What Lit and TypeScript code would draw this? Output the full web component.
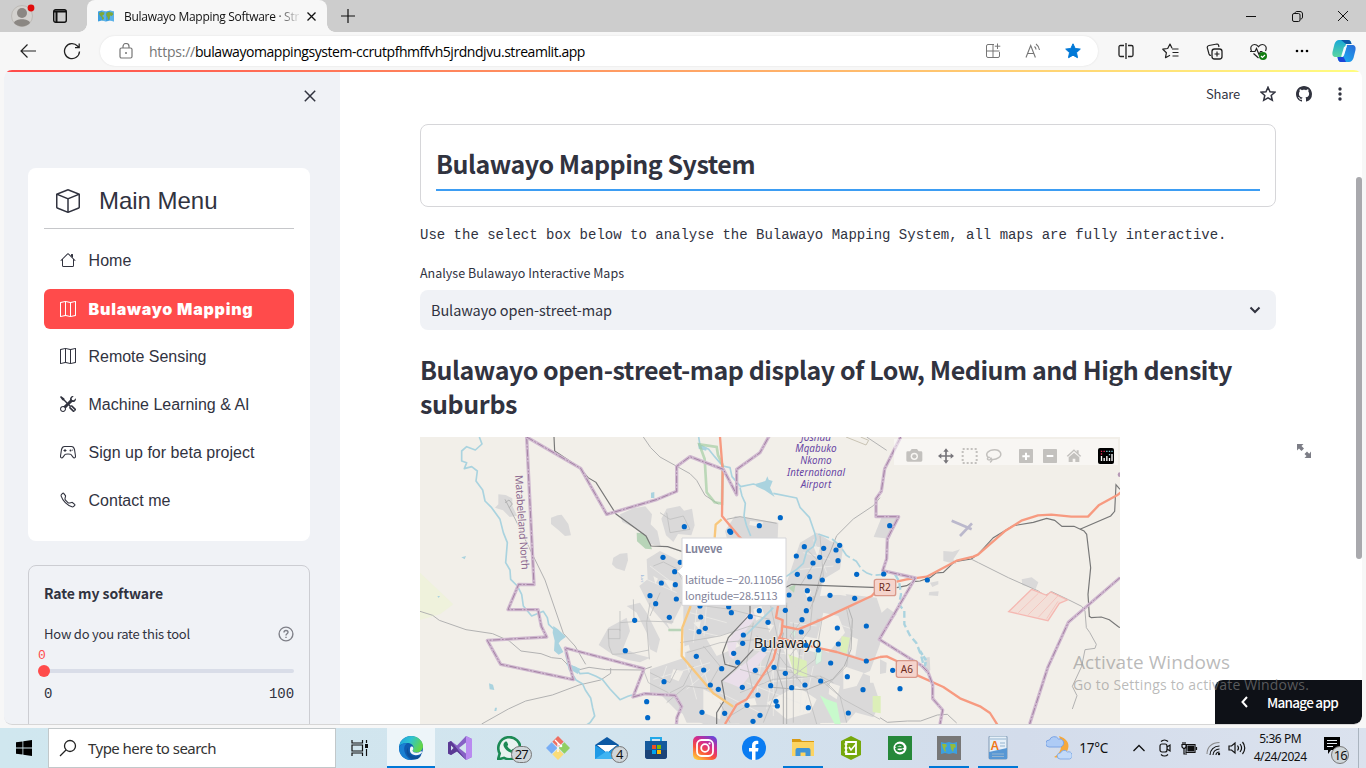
import { LitElement, html, svg, css, nothing } from "lit";
import { customElement, property } from "lit/decorators.js";

/** Single-line label whose tracking is adjusted so it spans `w` pixels. */
@customElement("fit-text")
class FitText extends LitElement {
  static styles = css`
    :host { display: inline-block; white-space: pre; }
    .run { display: inline-block; }
  `;
  @property() text = "";
  @property({ type: Number }) w = 0;
  render() {
    return html`<span class="run">${this.text}</span>`;
  }
  updated() {
    const run = this.renderRoot.querySelector(".run") as HTMLElement;
    run.style.letterSpacing = "0px";
    const natural = run.getBoundingClientRect().width;
    const n = this.text.length;
    if (this.w && n > 1) run.style.letterSpacing = `${(this.w - natural) / n}px`;
  }
}

const t = (text: string, w: number) => html`<fit-text .text=${text} .w=${w}></fit-text>`;

const ic = (size: number, box: string, body: unknown) =>
  html`<svg width=${size} height=${size} viewBox=${box} fill="none" stroke="currentColor">${body}</svg>`;
const solid = (size: number, ...paths: string[]) =>
  html`<svg width=${size} height=${size} viewBox="0 0 16 16" fill="currentColor">
    ${paths.map((d) => svg`<path d=${d} />`)}
  </svg>`;

const BOX = "M8.186 1.113a.5.5 0 0 0-.372 0L1.846 3.5 8 5.961 14.154 3.5 8.186 1.113zM15 4.239l-6.5 2.6v7.922l6.5-2.6V4.24zM7.5 14.762V6.838L1 4.239v7.923l6.5 2.6zM7.443.184a1.5 1.5 0 0 1 1.114 0l7.129 2.852A.5.5 0 0 1 16 3.5v8.662a1 1 0 0 1-.629.928l-7.185 2.874a.5.5 0 0 1-.372 0L.63 13.09a1 1 0 0 1-.63-.928V3.5a.5.5 0 0 1 .314-.464L7.443.184z";
const HOUSE = ["M2 13.5V7h1v6.5a.5.5 0 0 0 .5.5h9a.5.5 0 0 0 .5-.5V7h1v6.5a1.5 1.5 0 0 1-1.5 1.5h-9A1.5 1.5 0 0 1 2 13.5zm11-11V6l-2-2V2.5a.5.5 0 0 1 .5-.5h1a.5.5 0 0 1 .5.5z", "M7.293 1.5a1 1 0 0 1 1.414 0l6.647 6.646a.5.5 0 0 1-.708.708L8 2.207 1.354 8.854a.5.5 0 1 1-.708-.708L7.293 1.5z"];
const MAP = "M15.817.113A.5.5 0 0 1 16 .5v14a.5.5 0 0 1-.402.49l-5 1a.502.502 0 0 1-.196 0L5.5 15.01l-4.902.98A.5.5 0 0 1 0 15.5v-14a.5.5 0 0 1 .402-.49l5-1a.5.5 0 0 1 .196 0L10.5.99l4.902-.98a.5.5 0 0 1 .415.103zM10 1.91l-4-.8v12.98l4 .8V1.91zm1 12.98 4-.8V1.11l-4 .8v12.98zm-6-.8V1.11l-4 .8v12.98l4-.8z";
const TOOLS = "M1 0 0 1l2.2 3.081a1 1 0 0 0 .815.419h.07a1 1 0 0 1 .708.293l2.675 2.675-2.617 2.654A3.003 3.003 0 0 0 0 13a3 3 0 1 0 5.878-.851l2.654-2.617.968.968-.305.914a1 1 0 0 0 .242 1.023l3.356 3.356a1 1 0 0 0 1.414 0l1.586-1.586a1 1 0 0 0 0-1.414l-3.356-3.356a1 1 0 0 0-1.023-.242L10.5 9.5l-.96-.96 2.68-2.643A3.005 3.005 0 0 0 16 3c0-.269-.035-.53-.102-.777l-2.14 2.141L12 4l-.364-1.757L13.777.102a3 3 0 0 0-3.675 3.68L7.462 6.46 4.793 3.793a1 1 0 0 1-.293-.707v-.071a1 1 0 0 0-.419-.814L1 0zm9.646 10.646a.5.5 0 0 1 .708 0l3 3a.5.5 0 0 1-.708.708l-3-3a.5.5 0 0 1 0-.708zM3 11l.471.242.529.026.287.445.445.287.026.529L5 13l-.242.471-.026.529-.445.287-.287.445-.529.026L3 15l-.471-.242L2 14.732l-.287-.445L1.268 14l-.026-.529L1 13l.242-.471.026-.529.445-.287.287-.445.529-.026L3 11z";
const PHONE = "M3.654 1.328a.678.678 0 0 0-1.015-.063L1.605 2.3c-.483.484-.661 1.169-.45 1.77a17.568 17.568 0 0 0 4.168 6.608 17.569 17.569 0 0 0 6.608 4.168c.601.211 1.286.033 1.77-.45l1.034-1.034a.678.678 0 0 0-.063-1.015l-2.307-1.794a.678.678 0 0 0-.58-.122l-2.19.547a1.745 1.745 0 0 1-1.657-.459L5.482 8.062a1.745 1.745 0 0 1-.46-1.657l.548-2.19a.678.678 0 0 0-.122-.58L3.654 1.328z";
const GITHUB = "M8 0C3.58 0 0 3.58 0 8c0 3.54 2.29 6.53 5.47 7.59.4.07.55-.17.55-.38 0-.19-.01-.82-.01-1.49-2.01.37-2.53-.49-2.69-.94-.09-.23-.48-.94-.82-1.13-.28-.15-.68-.52-.01-.53.63-.01 1.08.58 1.23.82.72 1.21 1.87.87 2.33.66.07-.52.28-.87.51-1.07-1.78-.2-3.64-.89-3.64-3.95 0-.87.31-1.59.82-2.15-.08-.2-.36-1.02.08-2.12 0 0 .67-.21 2.2.82.64-.18 1.32-.27 2-.27.68 0 1.36.09 2 .27 1.53-1.04 2.2-.82 2.2-.82.44 1.1.16 1.92.08 2.12.51.56.82 1.27.82 2.15 0 3.07-1.87 3.75-3.65 3.95.29.25.54.73.54 1.48 0 1.07-.01 1.93-.01 2.2 0 .21.15.46.55.38A8.013 8.013 0 0 0 16 8c0-4.42-3.58-8-8-8z";

const worldMap = (s: number) => html`<svg width=${s} height=${s} viewBox="0 0 16 16">
  <path fill="#3c9fe0" d="M0 3.5 4 2.5l4 1 4-1 4 1v10l-4-1-4 1-4-1-4 1z" />
  <path fill="#7cc4f0" d="M4 2.5l4 1v10l-4-1zM12 2.5l4 1v10l-4-1z" opacity=".5" />
  <path fill="#7ea838" d="M1 5l3-1 2.500.5-.5 2L4 8l1.500 1 .5 1.500-1.500 2L3.500 9 1.500 7zM8.500 5l2-1 4 .5.8 2-1.800 1.500-1.500-.5L11.500 11l-1.200 1L9.500 9 8.300 7.500z" />
</svg>`;

/* Suburb markers: [x, y] in map units, three units to a pixel. */
const DOTS: number[][] = [
  [616, 644], [644, 553], [680, 797], [683, 845], [690, 479], [707, 503],
  ...[[103, 272], [391, 245], [328, 269], [239, 285], [242, 289], [39, 364], [91, 379], [74, 407], [34, 441], [76, 446], [79, 489], [58, 544], [150, 510], [152, 543], [166, 577], [147, 587], [139, 661], [161, 702], [215, 698], [42, 737], [181, 747], [205, 760], [156, 829], [224, 832], [463, 332], [439, 360], [521, 337], [558, 342], [569, 328], [509, 364], [489, 381], [564, 374], [442, 415], [479, 422], [517, 432], [620, 415], [701, 414], [472, 464], [417, 477], [479, 489], [540, 478], [614, 487], [236, 512], [244, 530], [328, 524], [301, 542], [354, 559], [406, 523], [469, 524], [456, 551], [454, 588], [562, 576], [649, 570], [280, 597], [278, 622], [342, 640], [251, 652], [263, 679], [468, 628], [505, 642], [565, 624], [542, 681], [649, 675], [592, 722], [316, 703], [372, 694], [406, 712], [277, 754], [362, 749], [425, 755], [465, 747], [512, 735], [639, 761], [324, 777], [291, 808], [378, 796], [382, 810], [330, 838], [309, 856], [475, 815], [595, 831]].map(([x, y]) => [x + 690, y]),
  ...[[29, 269], [142, 432], [38, 703], [60, 758]].map(([x, y]) => [x + 1380, y]),
];

@customElement("city-map")
class CityMap extends LitElement {
  static styles = css`
    :host { display: block; width: 700px; height: 287px; }
    svg { display: block; }
    .urban { fill: #dad9d9; }
    .gap { fill: #f1eee8; }
    .road { fill: none; stroke: #b2b2b2; stroke-width: 3; }
    .fine { fill: none; stroke: #bfbfbf; stroke-width: 2.500; }
    .lane { fill: none; stroke: #eceae7; stroke-width: 2.500; }
    .rail { fill: none; stroke: #777; stroke-width: 3.500; }
    .river { fill: none; stroke: #aad3df; stroke-width: 5; stroke-linejoin: round; }
    .trunk { fill: none; stroke: #f79a80; stroke-width: 7; stroke-linejoin: round; }
    .prim { fill: none; stroke: #f8c77c; stroke-width: 7; stroke-linejoin: round; }
    .edge { fill: none; stroke: #d0b9d0; stroke-width: 10; stroke-linejoin: round; }
    .mid { fill: none; stroke: #a583a5; stroke-width: 3; stroke-dasharray: 22 5 5 5; }
    .dot { fill: #0068c9; }
    .place { font-family: "Noto Sans", sans-serif; }
    .src { font-family: "Noto Sans CJK SC", sans-serif; fill: #83849a; }
    .air { font-style: italic; fill: #6846a4; font-size: 30px; }
    .halo { stroke: #f2efe9; stroke-width: 6; paint-order: stroke; }
    .badge { fill: #f5d4cc; stroke: #d9998a; stroke-width: 4; }
    .code { font-size: 30px; fill: #6b2b20; }
  `;

  private border(d: string) {
    return svg`<path class="edge" d=${d} /><path class="mid" d=${d} />`;
  }

  render() {
    return html`<svg width="700" height="287" viewBox="0 3 2100 861">
      <rect y="0" width="2100" height="870" fill="#f2efe9" />
      <path d="M0 410 100 505 60 535 0 552z" fill="#eff2dc" />
      <g class="urban">
        <path d="M235 175l22 2 20 10v22l14 30-22 4-20-20-24-8 10-10z" />
        <path d="M393 245l20-7 12-2 20 28 8 34-18 2-20-18-22-18z" />
        <path d="M580 365l20-12 22-2 2 22-10 32-26-8-12-12z" />
        <path d="M600 235l40-18 36-6 20 24-4 30 20 20 10 45-30-5-40-45-45-22zM740 218l40-8 12 14 24-6 8 50-10 30-40-4-14 24-22-20-14-50z" />
        <path d="M680 370l40-25 60 30 8 125-40 80-60-70-30-60 25-20z" />
        <path d="M620 510l40-10 20 30 40 80-10 40-20-10-10-50-30-60z" />
        <path d="M565 575l55-30 10 40-20 50 40 20 40 10-30 14-40-8-40-14-44-30z" />
        <path d="M690 700l90-30 110-40 30 60 10 80-30 90-100 0-40-90-70 0z" />
        <path d="M790 470l180-40 30 90-10 80-50 60-40 50-40-10-60 10-10-120z" />
        <path d="M915 285l30-45 130 20-2 45-50 30-100-20z" />
        <path d="M1100 440l40-120 50-30 40 25 40 15-10 70-50 30-10 50 80-5 90 10 20 60-10 80-30 80-50 20-80-40-140-50z" />
        <path d="M980 500l110-20 110 90 100 20-20 110-60 120-20 44h-240l-60-70 30-90-20-100z" />
        <path d="M820 690l200 0 100-40 120 30 110 40 0 60-70 80-430 4-80-40-70-70z" />
        <path d="M1270 740l90 0 20 60-20 44-50-14-40-30z" />
        <path d="M1361 303l24-60h50l-26 65z" />
        <path d="M1380 535l22-20 28 20-50 62z" />
        <path d="M1570 345l28 2 22-7-20 30 10 15-40-10zM1805 430l30-6 20 15-8 20-40-12zM1530 440l25-5v10l-18 8zM1528 468l28-2-2 14-28-2zM1515 665l14-2 2 40-10 4zM1380 670l20 10-2 30-18 4z" />
      </g>
      <g class="gap">
        <path d="M860 610l70-20 30 40-70 30zM900 400l60 0 0 60-50 0zM1210 530l45 10 20 50-50 60-40-20zM1150 600l50 10-10 40-40-10zM1270 690l60 20-20 40-40 10zM850 760l60 30-10 60-50-20zM1040 800l90-50 60 40-20 40-70 20zM740 560l30 10-10 30zM730 430l30 5-5 30zM1090 640l40 0 20 60-30 10zM1220 470l40-20 20 30z" />
        <path d="M770 640l36-14 4 16-30 14zM760 700l30 6-14 30-24-10zM1000 520l24-10 10 30-26 14zM960 690l30 6-10 24-26-6zM1290 600l24 10-8 50-20-8zM1230 740l30 10-10 40-24-16zM700 420l14 8-8 16zM980 790l24-4 6 20-30 8zM1180 330l20 4-8 26zM1150 460l24 6-10 24zM820 560l22-4-4 24zM990 255l40 4-8 14-34-6zM1040 560l22 8-14 22z" />
      </g>
      <g class="lane">
        <path d="M810 530l110 30M806 580l90 20M830 520l-10 100M860 500l-8 100M700 730l170-50M720 750l20-60M800 680l30 110M840 670l40 120M870 700l-70 60M990 640l160 20M1000 690l130 10M1030 620l-20 160M1060 600v240M1150 650l-10 180M1180 690l-30 140M1200 720l-170 20M980 740l180 70M900 770l120 60M1150 350l80 20M1140 400l100-10M1180 310l40 100M1110 560l80 10M1240 560l60 20M690 390l80 60M680 430l90 40M1080 560l-40 260" />
      </g>
      <path d="M920 620l70-95 20 15-60 80-10 50-12-10zM910 735l110-90 20 10-80 100-24-10z" fill="#eadfea" />
      <path d="M650 290l20 2 14 14 12 34-20-2-25-22zM1105 455l22-10-5 25zM745 578h40v8h-40z" fill="#b8d4b8" />
      <path d="M1105 655l55 20 2 50-40-12zM1265 600l25 5-10 48-20-8zM1358 780h24v52l-24-4z" fill="#dcefb8" />
      <path d="M1200 778l20 12 30 10 12 64h-18l-30-58z" fill="#c8facc" />
      <path d="M1184 648l22-8-2 36-16 10zM1112 588l14-2-2 18z" fill="#d8f4e0" stroke="#b8d8c8" />

      <g class="fine">
        <path d="M565 580h35v28h-35zM600 525v60M600 560l70-5 90 3M640 490l2 60M565 580l2 50 10 25 60-3 50-10M690 500l-10 60 8 110M720 470l-30 70M700 390l30-12 40 20 20 40M670 700l15 40 60 30M690 710l60 30 20-40M800 650l100-30 120-10 110 30M780 500l150 20 120 30M1000 560l-20 120 20 90M1050 500l30 140-10 120-40 100M1120 560v300M1140 560l-30 40 30 40-10 90M1180 480l-10 100-60 80M860 760l40-70-50-60M780 620l120-20 90-30 60 10M740 800l60-50 80 10M1010 600l60 50 30 40 100 40 70 60 110 60M1190 550l16 0-20 120-80 60M1110 700l50 60 30 104M960 700l70 20 30-20 60 10M960 770l100-40 140-10 40 20M930 840l50-30 90 0M1150 330l40 40-50 80M1200 300l10 120-40 100" />
        <path d="M720 230l30 20 40-10 20 40-60 10-10-60M1280 520l14 70-14 100-60 60M1200 720l60 60 20 80M900 800l30 60M820 690l-30 60-40 20" />
      </g>
      <g class="road">
        <path d="M0 526l38 12 20 15 80 28 80 12 50 22 35 30 60 8 32 12 30 3 22 22 20 14 40-10 50 7 110 1 28-10" />
        <path d="M255 190l32 62 88 180 55 160 35 38 32 55" />
        <path d="M185 864l80-45 52-24 80-18 80-30 65-15 30-20v-16" />
        <path d="M670 3l22 32 28 28 90 50 20 20 25 45 40 26" />
        <path d="M1285 515l12 35-4 90-20 50-35 40-80 32-100-8-20-60 20-60" />
        <path d="M1380 185l-20 24-60 40-50 50-20 50-20 40-30 110M1340 3l60 40" />
        <path d="M1655 370l20 10 90 45 90 40 20 14 20-12 50 24 40 20 10 14 4 50 10 14 20 36-4 12-30 4-10 50-28 60 14 28-14 40" />
        <path d="M1380 845l22 14 60-4 40 0 50-18 30-2 28 26" />
        <path d="M255 200l12-8 10 12-10 12" />
        <path d="M920 250l40-8 110 20" />
      </g>
      <g class="rail">
        <path d="M402 3l2 42 75 50 25 30 24 14 60 95 90 66 15 30 50 2 42 14" />
        <path d="M1095 455l20-10 260 10M1430 455l30-6 20-12 20-2 30-10 18-14 22-2 34-32 50-8 20-14 46-50 60-36 60-10 40-12 24 6 22 18 36 0 30 14 8 10 12 100-8 80 4 66 6 4 30-2 24 8 28 22 32 10" />
        <path d="M1980 280l92-40 12-14 4-80 12 14" />
        <path d="M990 505v30l-65 70-17 45 7 35 35 10 50-55-50 55-45 40 10 55-25 40v34" />
      </g>
      <path class="road" d="M1100 500v364M1090 590l-20 110 20 60v104" />

      <g class="river">
        <path d="M178 3 186 24 166 42 140 32 125 45 125 75 140 80 133 98 155 92 172 105 168 135 188 162 195 195 215 215 240 250 250 290 262 320 257 380 270 402 272 430 292 450 305 475 310 510 335 540 370 526 382 545 386 565 404 582" />
        <path d="M436 650l12 50 20 32 20 12 8 18 16 24 6 30 6 24-14 20-18 12" />
        <path d="M440 685l28 10 12 18 24-2 24 10 20 10 22 28 30 32 24-10 12-4" />
        <path d="M836 3 840 28 866 40 884 62 908 90 930 95 936 122 962 152 1000 144 1020 150M1060 172 1130 186 1140 214 1168 244 1184 290 1188 310 1180 332 1160 346 1150 382 1130 400 1098 422" />
        <path d="M960 155 966 180 976 202 972 240 980 270 992 300M975 600 1025 550 1060 515" />
        <path d="M1195 294l40 14 24 20 20 30 30 18 16 24 14 10 20 8 44-4" stroke-dasharray="34 10" />
        <path d="M1425 415l12 20 6 40-6 30 16 20 0 40 16 32 20 24 14 36 10 40 8 12" stroke-dasharray="20 10" stroke-width="7" />
        <path d="M1500 645l18 28-4 20 10 16" stroke-dasharray="14 5" stroke-width="8" />
      </g>
      <path fill="#aad3df" d="M400 570l14 10 24 22-16 12-6 8 14 26-14 8-14-12 2-30-6-24zM1008 143l28-8 6-14 4 10 12 4-8 20 14 28-30-20-26-12zM207 742l12 4 4 16-14-2zM225 815l6 0-2 10-6 0zM693 170l10-2v18h-10zM124 364l14-4-4 10zM455 688l26 10-8 16-16-10zM52 480l8 0-4 6zM834 22l28 14-4 8-22-6z" />
      <path fill="none" stroke="#9ecb9e" stroke-opacity=".65" stroke-width="8" d="M838 25l52 8 4 24 14 30-2 116-22-4-24-30-6-100z" />

      <g class="prim">
        <path d="M905 250 887 266 884 305M812 510 787 575 785 660 880 772 940 812" />
      </g>
      <g class="trunk">
        <path d="M900 3 908 103 906 240 956 300 1040 380 1075 505 1068 545 1088 552 1085 590 1075 612 1060 670 980 790 950 806 915 864" />
        <path d="M1085 570 1135 580 1205 550 1280 515 1355 480 1364 470M1075 605 1190 635 1250 648 1339 675 1380 663M1430 437l30-7 60-8 90-48 50-12 14-6 80-70 50-32 50-16 40-2 60 6h50l32-34 55-30 18-14" />
        <path d="M1380 663l20-2 30 14 64 44 76 34 50 34 60 24 30 20 24 38" />
      </g>

      ${this.border("M320 3l22 443-46-1-32 76h90l10 50 16 32-178 10 40 72 218 46-24-95 236 62-33 85 36-10 50 3 40 2 20 34-14 32-4 50")}
      ${this.border("M320 3l162 94 78 138 152-45 58-24v-75l40-29 100 38 40 76 0-76 70-50 28-51")}
      ${this.border("M1442 3l-48 95-10 68-16 22 0 54 68 0-34 66-2 60-12 36 98 22-108 184 96 60 30 18 20 20 14 38 0 42 30 34-8 42")}
      ${this.border("M2100 425l-155 134-62 136-54 169")}
      <circle cx="2100" cy="116" r="7" fill="#b79ab7" />
      <path d="M1595 254l60 26M1620 300l36-38" stroke="#bbb8cc" stroke-width="8" />
      <path d="M1278 3l60 24 8-14-24-10" fill="none" stroke="#c9c4b4" stroke-width="3" />
      <g stroke="#f5b8b2" stroke-width="4">
        <path d="M1835 460l45 18 12-10 50 24-24 10-34 52-118-27z" fill="#f3dfd8" />
        <path d="M1795 530l60-58M1825 536l60-60M1855 544l60-66M1880 548l34-52" stroke-width="2" />
      </g>

      <g class="place air halo" text-anchor="middle">
        <text x="1188" y="14">Joshua</text>
        <text x="1188" y="48" textLength="124">Mqabuko</text>
        <text x="1188" y="84" textLength="94">Nkomo</text>
        <text x="1188" y="119" textLength="174">International</text>
        <text x="1188" y="155" textLength="92">Airport</text>
      </g>
      <text class="place halo" font-size="32" fill="#8c6990" transform="translate(285 118) rotate(86)" textLength="284">Matabeleland North</text>
      <text class="place" font-size="11" fill="#7fa8d8" transform="translate(664 416) rotate(90)">Luvc</text>
      <text class="place" stroke="#f2efe9" stroke-width="5" paint-order="stroke" font-size="44" fill="#222" x="1001" y="636" textLength="202">Bulawayo</text>
      ${DOTS.map(([x, y]) => svg`<circle class="dot" cx=${x} cy=${y} r="7.800" />`)}

      <rect class="badge" x="1363" y="430" width="64" height="49" rx="6" />
      <text class="place code" x="1376" y="465" textLength="36">R2</text>
      <rect class="badge" x="1429" y="674" width="63" height="50" rx="6" />
      <text class="place code" x="1442" y="710" textLength="37">A6</text>

      <path d="M786 306h312v202H786v-88l-15-14 15-13z" fill="#fff" stroke="#d5d5d8" stroke-width="3" />
      <text class="src" font-weight="700" font-size="33" x="795" y="351" textLength="112">Luveve</text>
      <text class="src" font-size="33" x="795" y="444" textLength="294">latitude =−20.11056</text>
      <text class="src" font-size="33" x="795" y="492" textLength="278">longitude=28.5113</text>

      <rect x="1422" y="9" width="672" height="78" fill="#fff" fill-opacity=".45" />
      <g fill="#c3c1be">
        <path d="M1463 46h7l5-7h16l5 7h7q4 0 4 4v23q0 4-4 4h-40q-4 0-4-4V50q0-4 4-4z" />
        <circle cx="1483" cy="61" r="11" fill="#f8f6f3" /><circle cx="1483" cy="61" r="6.500" />
        <rect x="1797" y="39" width="42" height="42" rx="2" />
        <path d="M1815 50h6v8h8v6h-8v8h-6v-8h-8v-6h8z" fill="#fff" />
        <rect x="1869" y="39" width="42" height="42" rx="2" />
        <path d="M1880 57h20v6h-20z" fill="#fff" />
        <path d="M1940 60l22-20 8 8v-5h6v10l8 7-4 2-18-17-18 17zM1946 64l16-14 16 14v14h-12v-10h-8v10h-12z" />
      </g>
      <path d="M1628 39h42v42h-42z" fill="none" stroke="#c3c1be" stroke-width="6" stroke-dasharray="6 6" />
      <path d="M1706 66c-14-12 0-25 18-25s24 16 12 24-24 6-26 4m0-4c-6-4-10 4-6 6s10 0 8-6c6 6 4 10-2 14" fill="none" stroke="#c3c1be" stroke-width="4.500" />
      <g stroke="#77757a" stroke-width="5" fill="#77757a">
        <path d="M1578 44v32M1562 60h32" />
        <path stroke="none" d="M1578 37l8 10h-16zM1578 83l8-10h-16zM1554 60l10-8v16zM1602 60l-10-8v16z" />
      </g>
      <rect x="2034" y="36" width="48" height="48" rx="6" fill="#000" />
      <path d="M2044.500 60v15M2052.500 66v9M2060.500 60v15M2068.500 66v9M2076 54v21" stroke="#fff" stroke-width="4" />
      <path d="M2044.500 44v4M2052.500 44v4M2044.500 52v4" stroke="#e0285a" stroke-width="4" />
      <path d="M2060.500 44v4M2068.500 44v4M2068.500 54v4M2076 44v4" stroke="#7fc8d8" stroke-width="4" />
    </svg>`;
  }
}

@customElement("task-bar")
class TaskBar extends LitElement {
  static styles = css`
    :host { display: flex; height: 40px; box-sizing: border-box; background: linear-gradient(90deg, #d0e7ef, #d2e4ee 45%, #d3dceb 75%, #dbe2ee); font-family: "Noto Sans", "Open Sans", sans-serif; color: #111; }
    svg { display: block; flex: none; }
    .start { width: 48px; display: flex; align-items: center; justify-content: center; }
    .search { width: 286px; height: 38px; border: 1px solid #c2c8ca; background: #fff; display: flex; align-items: center; }
    .search svg { margin: 0 11px 0 10px; }
    .search fit-text { font-size: 15px; color: #333; }
    .view { width: 51px; display: flex; align-items: center; justify-content: center; }
    .view svg { margin-right: 4px; }
    .apps { flex: none; display: grid; grid-template-columns: repeat(13, 48.950px); }
    .app { position: relative; display: flex; align-items: center; justify-content: center; width: 48px; height: 40px; box-sizing: border-box; }
    .open::after { content: ""; position: absolute; left: 4px; right: 4px; bottom: 0; height: 2px; background: #0078d7; }
    .active { background: #edf5f9; }
    .active::after { left: 0; right: 0; }
    .count { position: absolute; left: 26px; top: 18px; width: 21px; height: 17px; box-sizing: border-box; border: 1px solid #777; border-radius: 9px; background: #cfd6da; font-size: 13px; line-height: 15px; text-align: center; letter-spacing: -0.800px; }
    .round { left: 28px; width: 17px; }
    .tray { flex: 1; display: flex; align-items: center; }
    .tray > * { flex: none; }
    .cell { display: flex; justify-content: center; }
    .weather { margin-left: 23px; }
    .temp { margin-left: 7px; width: 46px; font-size: 13.500px; }
    .up { width: 28px; }
    .c24 { width: 24px; }
    .clock { width: 62px; font-size: 12px; line-height: 18px; display: flex; flex-direction: column; align-items: center; }
    .note { position: relative; margin-left: 13px; width: 34px; height: 24px; }
    .note .count { left: 7px; top: 10px; width: 18px; height: 18px; line-height: 16px; letter-spacing: -1px; }
    .desk { border-left: 1px solid #aab4bf; height: 40px; width: 3px; }
  `;

  render() {
    const app = (cls: string, body: unknown, badge: unknown = nothing) => html`<div class="app ${cls}">
      <svg width="24" height="24" viewBox="0 0 24 24">${body}</svg>${badge}
    </div>`;
    return html`
      <div class="start"><svg width="16" height="16" viewBox="0 0 16 16"><path d="M0 2.300 6.500 1.400v6.200H0zM7.300 1.300 16 0v7.600H7.300zM0 8.400h6.500v6.200L0 13.700zM7.300 8.400H16V16l-8.700-1.300z" /></svg></div>
      <div class="search">
        <svg width="18" height="18" viewBox="0 0 18 18" fill="none" stroke="#222" stroke-width="1.300"><circle cx="11" cy="7" r="5.500" /><path d="M7 11 1 17" /></svg>
        ${t("Type here to search", 128)}
      </div>
      <div class="view"><svg width="18" height="16" viewBox="0 0 18 16" fill="none" stroke="#111" stroke-width="1.200"><path d="M1 0v3h10.500V0M1 16v-3h10.500v3M1 5h10.500v6H1zM15.500 0v3M15.500 9v7" /><path d="M14 4h3v4h-3z" fill="#111" stroke="none" /></svg></div>
      <div class="apps">
        ${app("open active", svg`
          <defs><linearGradient id="e1" x1="0" y1="0" x2="1" y2=".4"><stop offset="0" stop-color="#1b9de2" /><stop offset=".5" stop-color="#2fc3cf" /><stop offset="1" stop-color="#62d64a" /></linearGradient></defs>
          <circle cx="12" cy="12" r="12" fill="#0f5cb0" />
          <path d="M0 11C1 4 6 0 12 0c7 0 12 5 12 10 0 4-3 6.500-6.500 6.500-3 0-4-1.300-4-2 0-.8 1-1.300 1-3 0-2-2-4.500-6-4.500S1 8 0 11z" fill="url(#e1)" />
          <path d="M0 12c1-4 5-5.500 8-4.500C5 9 4.500 13 6 17c1 3 3 5.500 6 7C5 24 0 19 0 12z" fill="#1a80d2" />
          <path d="M9 11.500c-1 4 2 8.500 7 9 2.500.2 5-1 6.500-2-1.500 3-3 4-4 4.500-5 1-9-1-10.500-5-.8-2.500 0-5.500 1-6.500z" fill="#0c4f98" />
          <path d="M13.500 14.500c.5 2.500 5 3 8 1 1-.6 2 .3 1.500 1-2 3-9 4-11.500 0-1-2-.5-4.500 0-5.500 2-1.500 4 1 2 3.500z" fill="#f2f7fa" />`)}
        ${app("", svg`
          <path d="M18 0l6 3v18l-6 3-9-9-6 4-3-1.500V6.500L3 5l6 4.500z" fill="#8661c5" />
          <path d="M18 0l6 3v18l-6 3z" fill="#b98af0" /><path d="M18 6.500V17.500L11 12z" fill="#d4e5ee" />
          <path d="M0 6.500 3 5l15 19-9-8.500L3 19 0 17.500zM3 9.500v5L5.500 12z" fill="#5b3a94" /><path d="M3 9.500v5L5.500 12z" fill="#d4e5ee" />`)}
        ${app("", svg`
          <path d="M1 23.500 2.700 17.500A11 11 0 1 1 7 21.800z" fill="#e8f3f0" stroke="#1c8a55" stroke-width="2.600" />
          <path d="M8 6c1-.8 2-.3 2.500 1l.6 1.500c0 .8-1 1.500-.6 2 1 1.700 2.300 2.700 4 3.400.8 0 1-1.400 1.900-1.200l2.300 1.300c.3 2-1.700 3.300-3.700 3C11 16.500 7 12 6.500 9.500 6.300 8 7 6.800 8 6z" fill="#1c8a55" />`, html`<span class="count">27</span>`)}
        ${app("", svg`<g transform="rotate(45 12 12)">
          <rect x="3.500" y="3.500" width="8" height="8" fill="#ee6f62" /><rect x="12.500" y="3.500" width="8" height="8" fill="#91cf62" />
          <rect x="3.500" y="12.500" width="8" height="8" fill="#78aef5" /><rect x="12.500" y="12.500" width="8" height="8" fill="#fbdc78" /></g>
          <path d="M9 4l6 6M12 7v9" stroke="#fff" stroke-width="1.300" /><circle cx="15" cy="10" r="1.300" fill="#fff" />`)}
        ${app("", svg`
          <path d="M0 9 12 1l12 8v14H0z" fill="#0c59a4" /><path d="M2 9h20l-10 8z" fill="#fff" /><path d="M0 9l12 8 12-8v14H0z" fill="#1f9ae6" /><path d="M0 23 12 15l12 8z" fill="#40b4f2" />`, html`<span class="count round">4</span>`)}
        ${app("", svg`
          <path d="M7 6V2h10v4" fill="none" stroke="#22a8e8" stroke-width="2" /><path d="M1 5h22v15q0 3-3 3H4q-3 0-3-3z" fill="#155a9c" /><path d="M1 14h22v6q0 3-3 3H4q-3 0-3-3z" fill="#1b4377" />
          <path d="M8 9h4v4H8z" fill="#f25022" /><path d="M13 9h4v4h-4z" fill="#7fba00" /><path d="M8 14h4v4H8z" fill="#00a4ef" /><path d="M13 14h4v4h-4z" fill="#ffb900" />`)}
        ${app("", svg`
          <defs><linearGradient id="ig" x1=".2" y1="1" x2=".8" y2="0"><stop offset="0" stop-color="#ffc83c" /><stop offset=".35" stop-color="#f9503a" /><stop offset=".65" stop-color="#d42b8c" /><stop offset="1" stop-color="#6a45d8" /></linearGradient></defs>
          <rect width="24" height="24" rx="5" fill="url(#ig)" /><rect x="4" y="4" width="16" height="16" rx="4.500" fill="none" stroke="#fff" stroke-width="1.800" /><circle cx="12" cy="12" r="3.800" fill="none" stroke="#fff" stroke-width="1.800" /><circle cx="16.500" cy="7.500" r="1.100" fill="#fff" />`)}
        ${app("", svg`<circle cx="12" cy="12" r="12" fill="#0a7cf2" /><path d="M10 24v-8.500H7V12h3V9.500C10 6.300 12 4.800 14.300 4.800c1 0 2 .2 2 .2v3h-1.200c-1.300 0-1.600.8-1.600 1.600V12h3l-.5 3.500h-2.500V24z" fill="#fff" />`)}
        ${app("open", svg`<path d="M1 3h8l2 2h12v4H1z" fill="#d99a12" /><path d="M1 6h22v14H1z" fill="#fcd462" /><path d="M4.500 20v-6q0-2 2-2h11q2 0 2 2v6h-5v-3.500h-5V20z" fill="#3f94d6" />`)}
        ${app("", svg`<path d="M12 0 22 5v14l-10 5L2 19V5z" fill="#76a80c" /><path d="M7 6h10v12H7z" fill="none" stroke="#fff" stroke-width="1.800" /><path d="M5.500 8h3M5.500 12h3M5.500 16h3M10 11l2 3 5-6" stroke="#fff" stroke-width="1.600" fill="none" />`)}
        ${app("", svg`<rect width="24" height="24" fill="#26883a" /><circle cx="12" cy="12" r="6.500" fill="#fff" /><path d="M8 11c1-3 6-3 7 0-2 2-4-1-7 1.500 1 3.500 5 3.500 7.500 1" fill="none" stroke="#26883a" stroke-width="1.800" />`)}
        ${app("open", svg`<rect width="24" height="24" fill="#777" /><path fill="#3c9fe0" d="M4 6l4 1 4-1 4 1 4-1v12l-4-1-4 1-4-1-4 1z" /><path fill="#93bb3e" d="M5 8l4 0 1 2-2 2 1 3-1 1-2-4zM13 8l5 0 1 3-2 1-1 4-2-3z" />`)}
        ${app("open", svg`<rect x="3" y="0" width="18" height="23" rx="1" fill="#e6f0f8" stroke="#7e99b4" /><path d="M3 16l18-4v11H3z" fill="#5797d4" /><path d="M4 3h16M14 7h5M14 10h5M6 18h12M6 20.500h12" stroke="#94b4d0" /><text x="4.500" y="14" font-size="12" font-weight="700" fill="#f07818" font-family="Liberation Sans">A</text>`)}
      </div>
      <div class="tray">
        <svg class="weather" width="26" height="26" viewBox="0 0 26 26"><path d="M13 1c7 2 11 7 9 13s-8 10-14 8c6-3 10-11 5-21z" fill="#f5a83c" /><path d="M3 12a3.500 3.500 0 0 1 .5-7 5 5 0 0 1 9-1 4 4 0 0 1 2 8z" fill="#aecbf5" stroke="#7ca4e4" /><path d="M14 24a3 3 0 0 1 .5-6 4 4 0 0 1 7-1 3.500 3.500 0 0 1 2 7z" fill="#c2daf8" stroke="#85aee8" /></svg>
        <span class="temp">${t("17°C", 29)}</span>
        <span class="cell up"><svg width="12" height="8" viewBox="0 0 12 8" fill="none" stroke="#111" stroke-width="1.300"><path d="M.5 7 6 1.500 11.500 7" /></svg></span>
        <span class="cell c24"><svg width="14" height="18" viewBox="0 0 14 18" fill="none" stroke="#111" stroke-width="1.200"><rect x="2" y="5" width="7" height="8" rx="2" /><path d="M9 8l3-2v6L9 10M3 2.500C5 .5 8 .5 10 2.500M3 15.500c2 2 5 2 7 0" /></svg></span>
        <span class="cell c24"><svg width="18" height="14" viewBox="0 0 18 14" fill="none" stroke="#111" stroke-width="1.200"><path d="M6.500 3.500H15v8H6zM16.500 6v3M3 1v2M5 1v2M2 3.500h4v2.500L4 8 2 6zM4 8v5h3" /><path d="M8 5h5.500v5H8z" fill="#111" /></svg></span>
        <span class="cell c24"><svg width="15" height="15" viewBox="0 0 15 15" fill="none" stroke="#111" stroke-width="1.100"><path d="M1 13C1 6 6 1.500 13.500 1.500" stroke="#888" /><path d="M4 14c0-5 4-9 9.500-9M7 14c0-3.500 3-6 6.500-6M10 14c0-2 1.500-3 3.500-3" /><circle cx="13" cy="13" r="1.200" fill="#111" stroke="none" /></svg></span>
        <span class="cell c24"><svg width="18" height="14" viewBox="0 0 18 14" fill="none" stroke="#111" stroke-width="1.200"><path d="M1 5h2.500L7 2v10L3.500 9H1zM9.500 4.500c1.200 1.500 1.200 3.500 0 5M12 3c2 2.500 2 5.500 0 8M14.500 1c3 3.500 3 8.500 0 12" /></svg></span>
        <span class="clock">${t("5:36 PM", 42)}${t("4/24/2024", 53)}</span>
        <span class="note"><svg width="16" height="20" viewBox="0 0 16 20"><path d="M0 1h16v13H7l-3 4v-4H0z" /><path d="M3 4.500h10M3 7.500h10M3 10.500h6" stroke="#e8eef4" stroke-width="1.200" /></svg><span class="count">16</span></span>
        <span class="desk"></span>
      </div>`;
  }
}

@customElement("app-root")
class AppRoot extends LitElement {
  static styles = css`
    :host { display: block; position: relative; width: 1366px; height: 768px; overflow: hidden; background: #f7f7f7; --src: "Noto Sans CJK SC", sans-serif; --ui: "Open Sans", "Noto Sans", sans-serif; --mono: "Liberation Mono", "DejaVu Sans Mono", monospace; color: #31333f; font-family: var(--src); }
    svg { display: block; flex: none; }
    .cell { display: flex; align-items: center; justify-content: center; }

    .tabs { display: flex; height: 32px; background: #cdcdcd; color: #111; font-family: var(--ui); }
    .avatar { width: 44px; }
    .work { width: 32px; }
    .tab { position: relative; margin-left: 11px; width: 240px; box-sizing: border-box; padding-left: 11px; border-radius: 8px 8px 0 0; background: #f7f7f7; display: flex; align-items: center; font-size: 12px; }
    .tab::before, .tab::after { content: ""; position: absolute; bottom: 0; width: 8px; height: 8px; }
    .tab::before { left: -8px; background: radial-gradient(circle at 0 0, #cdcdcd 7.500px, #f7f7f7 8px); }
    .tab::after { right: -8px; background: radial-gradient(circle at 100% 0, #cdcdcd 7.500px, #f7f7f7 8px); }
    .title { margin-left: 10px; width: 175px; -webkit-mask-image: linear-gradient(90deg, #000 150px, transparent 178px); }
    .tabx { width: 24px; }
    .plus { width: 42px; flex: 1; justify-content: flex-start; padding-left: 14px; }
    .win { width: 46px; }

    .tools { display: flex; height: 38px; padding-left: 6px; align-items: center; color: #222; font-family: var(--ui); }
    .w44 { width: 44px; }
    .w40 { width: 40px; }
    .address { margin: 0 6px; width: 998px; height: 30px; border-radius: 15px; background: #fff; box-shadow: 0 0 2px #ddd; display: flex; align-items: center; color: #767676; }
    .lock { width: 52px; }
    .url { flex: 1; font-size: 14px; margin-left: -3px; color: #000; display: flex; }
    .scheme { color: #767676; }
    .star { margin-right: 5px; }

    .page { position: relative; margin: 0 4px; height: 655px; border-radius: 8px; overflow: hidden; background: #fff; display: flex; }
    .frame { position: absolute; inset: 0; border-radius: 8px; border: solid #d6d6d6; border-width: 0 0 1px; box-sizing: border-box; pointer-events: none; }
    .glow { position: absolute; left: 0; right: 0; top: 0; height: 2px; background: linear-gradient(90deg, #ff4b4b, #fffd80); }

    .side { width: 336px; box-sizing: border-box; padding: 0 30px 0 24px; background: #f0f2f6; display: flex; flex-direction: column; }
    .side > * { flex: none; }
    .close { height: 98px; display: flex; justify-content: flex-end; padding: 20px 0 0; box-sizing: border-box; margin-right: -6px; }
    .menu { width: 282px; height: 373px; box-sizing: border-box; padding: 0 16px; border-radius: 8px; background: #fff; font-family: "Liberation Sans", Arial, sans-serif; }
    .head { height: 61px; box-sizing: border-box; padding: 6px 0 0 12px; border-bottom: 1px solid #c6c7ca; display: flex; align-items: center; font-size: 24px; gap: 19px; }
    .items { display: flex; flex-direction: column; gap: 8px; padding-top: 11px; }
    .item { height: 40px; box-sizing: border-box; padding-left: 16px; display: flex; align-items: center; gap: 12.500px; font-size: 16px; border-radius: 6px; }
    .item fit-text { padding-top: 2px; }
    .on { background: #ff4b4b; color: #fff; font-family: Inter, "Open Sans", sans-serif; font-weight: 900; margin: 1px 0 -1px; }
    .on fit-text { padding-top: 0; }
    .rate { margin-top: 24px; width: 282px; height: 200px; box-sizing: border-box; border: 1px solid #cccdd2; border-radius: 8px; padding: 16px 15px; }
    .strong { font-weight: 700; font-size: 14px; line-height: 22px; }
    .ask { margin-top: 20px; display: flex; justify-content: space-between; align-items: center; font-size: 13px; line-height: 20px; color: #31333f; }
    .ask svg { color: #7f8088; }
    .value { color: #ff4b4b; font-family: var(--mono); font-size: 13px; line-height: 20px; margin: 2px 0 0 -6px; }
    .track { position: relative; height: 4px; margin-top: 3px; border-radius: 2px; background: #d9dde8; }
    .thumb { position: absolute; left: -6px; top: -4px; width: 12px; height: 12px; border-radius: 50%; background: #ff4b4b; }
    .range { display: flex; justify-content: space-between; font-family: var(--mono); font-size: 14px; line-height: 20px; margin-top: 11px; }

    .main { flex: 1; min-width: 0; display: flex; flex-direction: column; }
    .bar { height: 48px; display: flex; justify-content: flex-end; align-items: center; padding-right: 4px; font-size: 13px; color: #31333f; }
    .share { margin-right: 10px; line-height: 20px; }
    .w36 { width: 36px; }
    .body { width: 856px; margin: 6px 0 0 80px; }
    .hero { height: 83px; box-sizing: border-box; border: 1px solid #d6d6d9; border-radius: 8px; padding: 15px; }
    .big { font-weight: 600; font-size: 25px; line-height: 34px; margin: 6px 0 0; height: 43px; color: #31333f; }
    .rule { height: 2px; background: #3d9df3; }
    .note { font-family: var(--mono); font-size: 14px; line-height: 20px; margin: 18px 0 0; white-space: nowrap; }
    .label { font-size: 12.500px; line-height: 20px; margin-top: 18px; }
    .select { height: 40px; margin-top: 7px; border-radius: 8px; background: #f0f2f6; display: flex; align-items: center; justify-content: space-between; padding: 0 15px 0 11px; font-size: 14.500px; line-height: 22px; }
    .second { margin-top: 22px; height: auto; }
    .second fit-text { display: block; }
    .mapwrap { margin-top: 17px; display: flex; width: 942px; }
    .grow { margin: 6px 0 0 176px; color: #7c7d86; }

    .scroll { position: absolute; right: 0; top: 107px; width: 6px; height: 382px; border-radius: 3px; background: #a9a9ad; }
    .manage { position: absolute; right: 0; bottom: 1px; width: 147px; height: 44px; box-sizing: border-box; padding-left: 24px; border-radius: 8px 0 8px 0; background: #0e1117; color: #fff; display: flex; align-items: center; gap: 16px; font-size: 13.500px; line-height: 20px; font-weight: 500; }
    .mark { position: absolute; left: 1073px; top: 649px; color: rgba(140, 140, 140, 0.6); font-family: var(--ui); font-size: 19px; line-height: 26px; }
    .small { font-size: 14px; line-height: 20px; }
    .mark fit-text { display: block; }
    .foot { margin-top: 3px; }
  `;

  private menuItem(icon: unknown, text: string, w: number, on = false) {
    return html`<div class="item ${on ? "on" : ""}">${icon}${t(text, w)}</div>`;
  }

  render() {
    const map16 = solid(16, MAP);
    return html`
      <div class="tabs">
        <div class="cell avatar"><svg width="28" height="28" viewBox="0 0 28 28"><circle cx="14" cy="14" r="10.500" fill="#d3d1ce" stroke="#bdbab6" /><circle cx="14" cy="11" r="5" fill="#8b8783" /><path d="M6 21c1-5 15-5 16 0-4 4.500-12 4.500-16 0z" fill="#8b8783" /><circle cx="23" cy="6" r="3.400" fill="#e00b0b" /></svg></div>
        <div class="cell work">${ic(14, "0 0 14 14", svg`<rect x=".7" y=".7" width="12.600" height="12.600" rx="2" stroke-width="1.400" /><path d="M1 2.500h12M3.500 3v10.500" stroke-width="2" />`)}</div>
        <div class="tab">${worldMap(16)}<span class="title">${t("Bulawayo Mapping Software · Str", 175)}</span>
          <span class="cell tabx">${ic(9, "0 0 9 9", svg`<path d="M.5.5l8 8M8.500.5l-8 8" stroke-width="1.300" />`)}</span></div>
        <div class="cell plus">${ic(14, "0 0 14 14", svg`<path d="M7 0v14M0 7h14" stroke-width="1.200" />`)}</div>
        <div class="cell win">${ic(10, "0 0 10 10", svg`<path d="M0 5.500h10" />`)}</div>
        <div class="cell win">${ic(11, "0 0 11 11", svg`<rect x=".5" y="2.500" width="7.500" height="8" rx="1.500" /><path d="M3 2.500C3 1 4 .5 5 .5h3c1.500 0 2.500 1 2.500 2.500v3c0 1.500-1 2-2 2" />`)}</div>
        <div class="cell win">${ic(10, "0 0 10 10", svg`<path d="M0 0l10 10M10 0 0 10" />`)}</div>
      </div>

      <div class="tools">
        <div class="cell w44">${ic(16, "0 0 16 16", svg`<path d="M16 8H1M7.500 1.500 1 8l6.500 6.500" stroke-width="1.200" />`)}</div>
        <div class="cell w44">${ic(18, "0 0 18 18", svg`<path d="M16.500 9.500A7.500 7.500 0 1 1 14.500 4L16 5.500M16.200 1.500v4.200H12" stroke-width="1.300" />`)}</div>
        <div class="address">
          <span class="cell lock">${ic(16, "0 0 16 16", svg`<rect x="2" y="5" width="12" height="10" rx="1.500" stroke-width="1.200" /><path d="M5 5V3.500a3 3 0 0 1 6 0V5" stroke-width="1.200" /><circle cx="8" cy="10" r="1" fill="currentColor" stroke="none" />`)}</span>
          <span class="url"><span class="scheme">${t("https://", 46)}</span>${t("bulawayomappingsystem-ccrutpfhmffvh5jrdndjvu.streamlit.app", 390)}</span>
          <span class="cell w40">${ic(16, "0 0 16 16", svg`<path d="M9 1.500H3q-1.500 0-1.500 1.500v10q0 1.500 1.500 1.500h10q1.500 0 1.500-1.500V9M1.500 8h13M8 1.500v13M12.500.5v5.500M9.800 3.200h5.500" />`)}</span>
          <span class="cell w40">${ic(16, "0 0 16 16", svg`<path d="M1 14.500 5.700 2.500l4.700 12M2.600 10.500h6.200M9.500 3.500c1 .8 1.500 2 1.500 3M11 1c2 1.500 3.200 3.500 3.500 6" stroke-width="1.100" />`)}</span>
          <span class="cell w40 star"><svg width="16" height="16" viewBox="0 0 16 16" fill="#0078d7" stroke="#0078d7" stroke-linejoin="round"><path d="M8 .8l2.200 4.700 5.100.6-3.800 3.500 1 5.100L8 12.200l-4.500 2.500 1-5.100L.7 6.100l5.100-.6z" /></svg></span>
        </div>
        <div class="cell w44">${ic(16, "0 0 16 16", svg`<path d="M6 2.500H2.500q-1.500 0-1.500 1.500v8q0 1.500 1.500 1.500H6M10 2.500h3.500q1.500 0 1.500 1.500v8q0 1.500-1.500 1.500H10M8 0v16" stroke-width="1.300" />`)}</div>
        <div class="cell w44">${ic(17, "0 0 17 17", svg`<path d="M10 5.300 8 1 5.700 5.500.8 6.200l3.600 3.500-.9 5L8 12.300M10 6h6.500M10.500 9.500h6M10.500 13h6" stroke-width="1.200" stroke-linejoin="round" />`)}</div>
        <div class="cell w44">${ic(17, "0 0 17 17", svg`<rect x="6" y="6" width="10" height="10" rx="2.500" stroke-width="1.300" /><path d="M11 8.500v5M8.500 11h5M13 4l-.5-2Q12 1 11 1L3 2.500Q1 3 1.200 4.500L3 11q.5 1.500 2 1.500" stroke-width="1.200" />`)}</div>
        <div class="cell w44"><svg width="17" height="17" viewBox="0 0 17 17" fill="none" stroke="#222" stroke-width="1.200"><path d="M1.500 8C0 5 1 1.500 4.500 1.500c2 0 3 1 4 2.200 1-1.200 2-2.200 4-2.200C16 1.500 17 5 15.500 8M3.500 10.500 8.500 15M0 8.500h5l1.500-3 2.500 6 1.500-3h2" /><circle cx="13" cy="13" r="4" fill="#107c10" stroke="none" /><path d="M11 13l1.400 1.400L15 12" stroke="#fff" /></svg></div>
        <div class="cell w44"><svg width="14" height="4" viewBox="0 0 14 4"><circle cx="2" cy="2" r="1.300" /><circle cx="7" cy="2" r="1.300" /><circle cx="12" cy="2" r="1.300" /></svg></div>
        <div class="cell w40"><svg width="24" height="24" viewBox="0 0 24 24">
          <defs><linearGradient id="c1" x1="0" y1="0" x2="0" y2="1"><stop offset="0" stop-color="#18a8d8" /><stop offset="1" stop-color="#5bd6a0" /></linearGradient><linearGradient id="c2" x1="1" y1="0" x2="0" y2="1"><stop offset="0" stop-color="#2a6ad8" /><stop offset="1" stop-color="#19b8f5" /></linearGradient></defs>
          <path d="M7 1h9c2 0 3 1.500 3.500 4H14l-4 13H4c-3 0-4-2-3.500-5l2-8C3.500 2.500 5 1 7 1z" fill="url(#c1)" />
          <path d="M9 1h7c2 0 3 1.500 3.500 4H15c-2 0-3-2-6-4z" fill="#0d58a8" />
          <path d="M17 23H9c-2 0-3-1.500-3.500-5H11l4-12h5c3 0 4 2 3.500 5l-2 8c-1 2.500-2.500 4-4.500 4z" fill="url(#c2)" />
          <path d="M5.500 18H11c1 0 1.500 2 3 5H9c-2 0-3-1.500-3.500-5z" fill="#1d45d8" /><path d="M12 8l3-1.500-3 10-3 1.500z" fill="#f4fbff" /></svg></div>
      </div>

      <div class="page">
        <div class="side">
          <div class="close">${ic(12, "0 0 12 12", svg`<path d="M.8.8l10.400 10.400M11.200.8.8 11.200" stroke-width="1.500" />`)}</div>
          <div class="menu">
            <div class="head">${solid(24, BOX)}${t("Main Menu", 118.5)}</div>
            <div class="items">
              ${this.menuItem(solid(16, ...HOUSE), "Home", 43)}
              ${this.menuItem(map16, "Bulawayo Mapping", 165, true)}
              ${this.menuItem(map16, "Remote Sensing", 118)}
              ${this.menuItem(solid(16, TOOLS), "Machine Learning & AI", 161)}
              ${this.menuItem(ic(16, "0 0 16 16", svg`<path d="M4.500 2.500h7c2 0 2.500 1 3 3l1 6.500c.2 2-1.500 2.500-2.500 1.200L11 10.500c-.5-.7-5.500-.7-6 0l-2 2.700C2 14.500.3 14 .5 12l1-6.500c.5-2 1-3 3-3z" stroke-width="1.100" /><path d="M5 5v3M3.500 6.500h3" /><circle cx="10.500" cy="6.500" r="1" fill="currentColor" stroke="none" /><circle cx="12.500" cy="6" r=".6" fill="currentColor" stroke="none" />`), "Sign up for beta project", 166)}
              ${this.menuItem(ic(16, "0 0 16 16", svg`<path d=${PHONE} stroke-width="1.100" />`), "Contact me", 82)}
            </div>
          </div>
          <div class="rate">
            <div class="strong">${t("Rate my software", 119)}</div>
            <div class="ask">${t("How do you rate this tool", 146)}${ic(16, "0 0 16 16", svg`<circle cx="8" cy="8" r="6.900" stroke-width="1.400" /><path d="M6 6.500c0-2.700 4-2.700 4-.2C10 7.800 8 7.800 8 9.500M8 10.700v1.300" stroke-width="1.400" />`)}</div>
            <div class="value">0</div>
            <div class="track"><div class="thumb"></div></div>
            <div class="range"><span>0</span>${t("100", 25)}</div>
          </div>
        </div>

        <div class="main">
          <div class="bar">
            <span class="share">${t("Share", 34)}</span>
            <span class="cell w36">${ic(16, "0 0 16 16", svg`<path d="M8 1.200l2 4.500 4.900.5-3.700 3.300 1.100 4.800L8 11.800l-4.300 2.500 1.100-4.800L1.100 6.200 6 5.700z" stroke-width="1.500" />`)}</span>
            <span class="cell w36">${solid(16, GITHUB)}</span>
            <span class="cell w36"><svg width="4" height="14" viewBox="0 0 4 14" fill="#31333f"><circle cx="2" cy="2" r="1.700" /><circle cx="2" cy="7" r="1.700" /><circle cx="2" cy="12" r="1.700" /></svg></span>
          </div>
          <div class="body">
            <div class="hero"><div class="big">${t("Bulawayo Mapping System", 319)}</div><div class="rule"></div></div>
            <div class="note">${t("Use the select box below to analyse the Bulawayo Mapping System, all maps are fully interactive.", 806.5)}</div>
            <div class="label">${t("Analyse Bulawayo Interactive Maps", 204)}</div>
            <div class="select">${t("Bulawayo open-street-map", 181)}${ic(12, "0 0 12 12", svg`<path d="M1.500 3.500 6 8l4.500-4.500" stroke-width="2" />`)}</div>
            <div class="big second">${t("Bulawayo open-street-map display of Low, Medium and High density", 812)}${t("suburbs", 97)}</div>
            <div class="mapwrap"><city-map></city-map>
              <svg class="grow" width="16" height="16" viewBox="0 0 16 16" fill="#7c7d86"><path d="M1 1h6.500L5.500 3 8 5.500 5.500 8 3 5.500l-2 2zM15 15H8.500l2-2L8.500 11 11 8.500l2.200 2.300L15 8.500z" /></svg>
            </div>
          </div>
        </div>
        <div class="scroll"></div>
        <div class="manage">${ic(12, "0 0 12 12", svg`<path d="M8 1 3.500 6 8 11" stroke-width="2" />`)}${t("Manage app", 71)}</div>
        <div class="glow"></div>
        <div class="frame"></div>
      </div>
      <task-bar class="foot"></task-bar>
      <div class="mark">${t("Activate Windows", 157)}<span class="small">${t("Go to Settings to activate Windows.", 236)}</span></div>`;
  }
}
